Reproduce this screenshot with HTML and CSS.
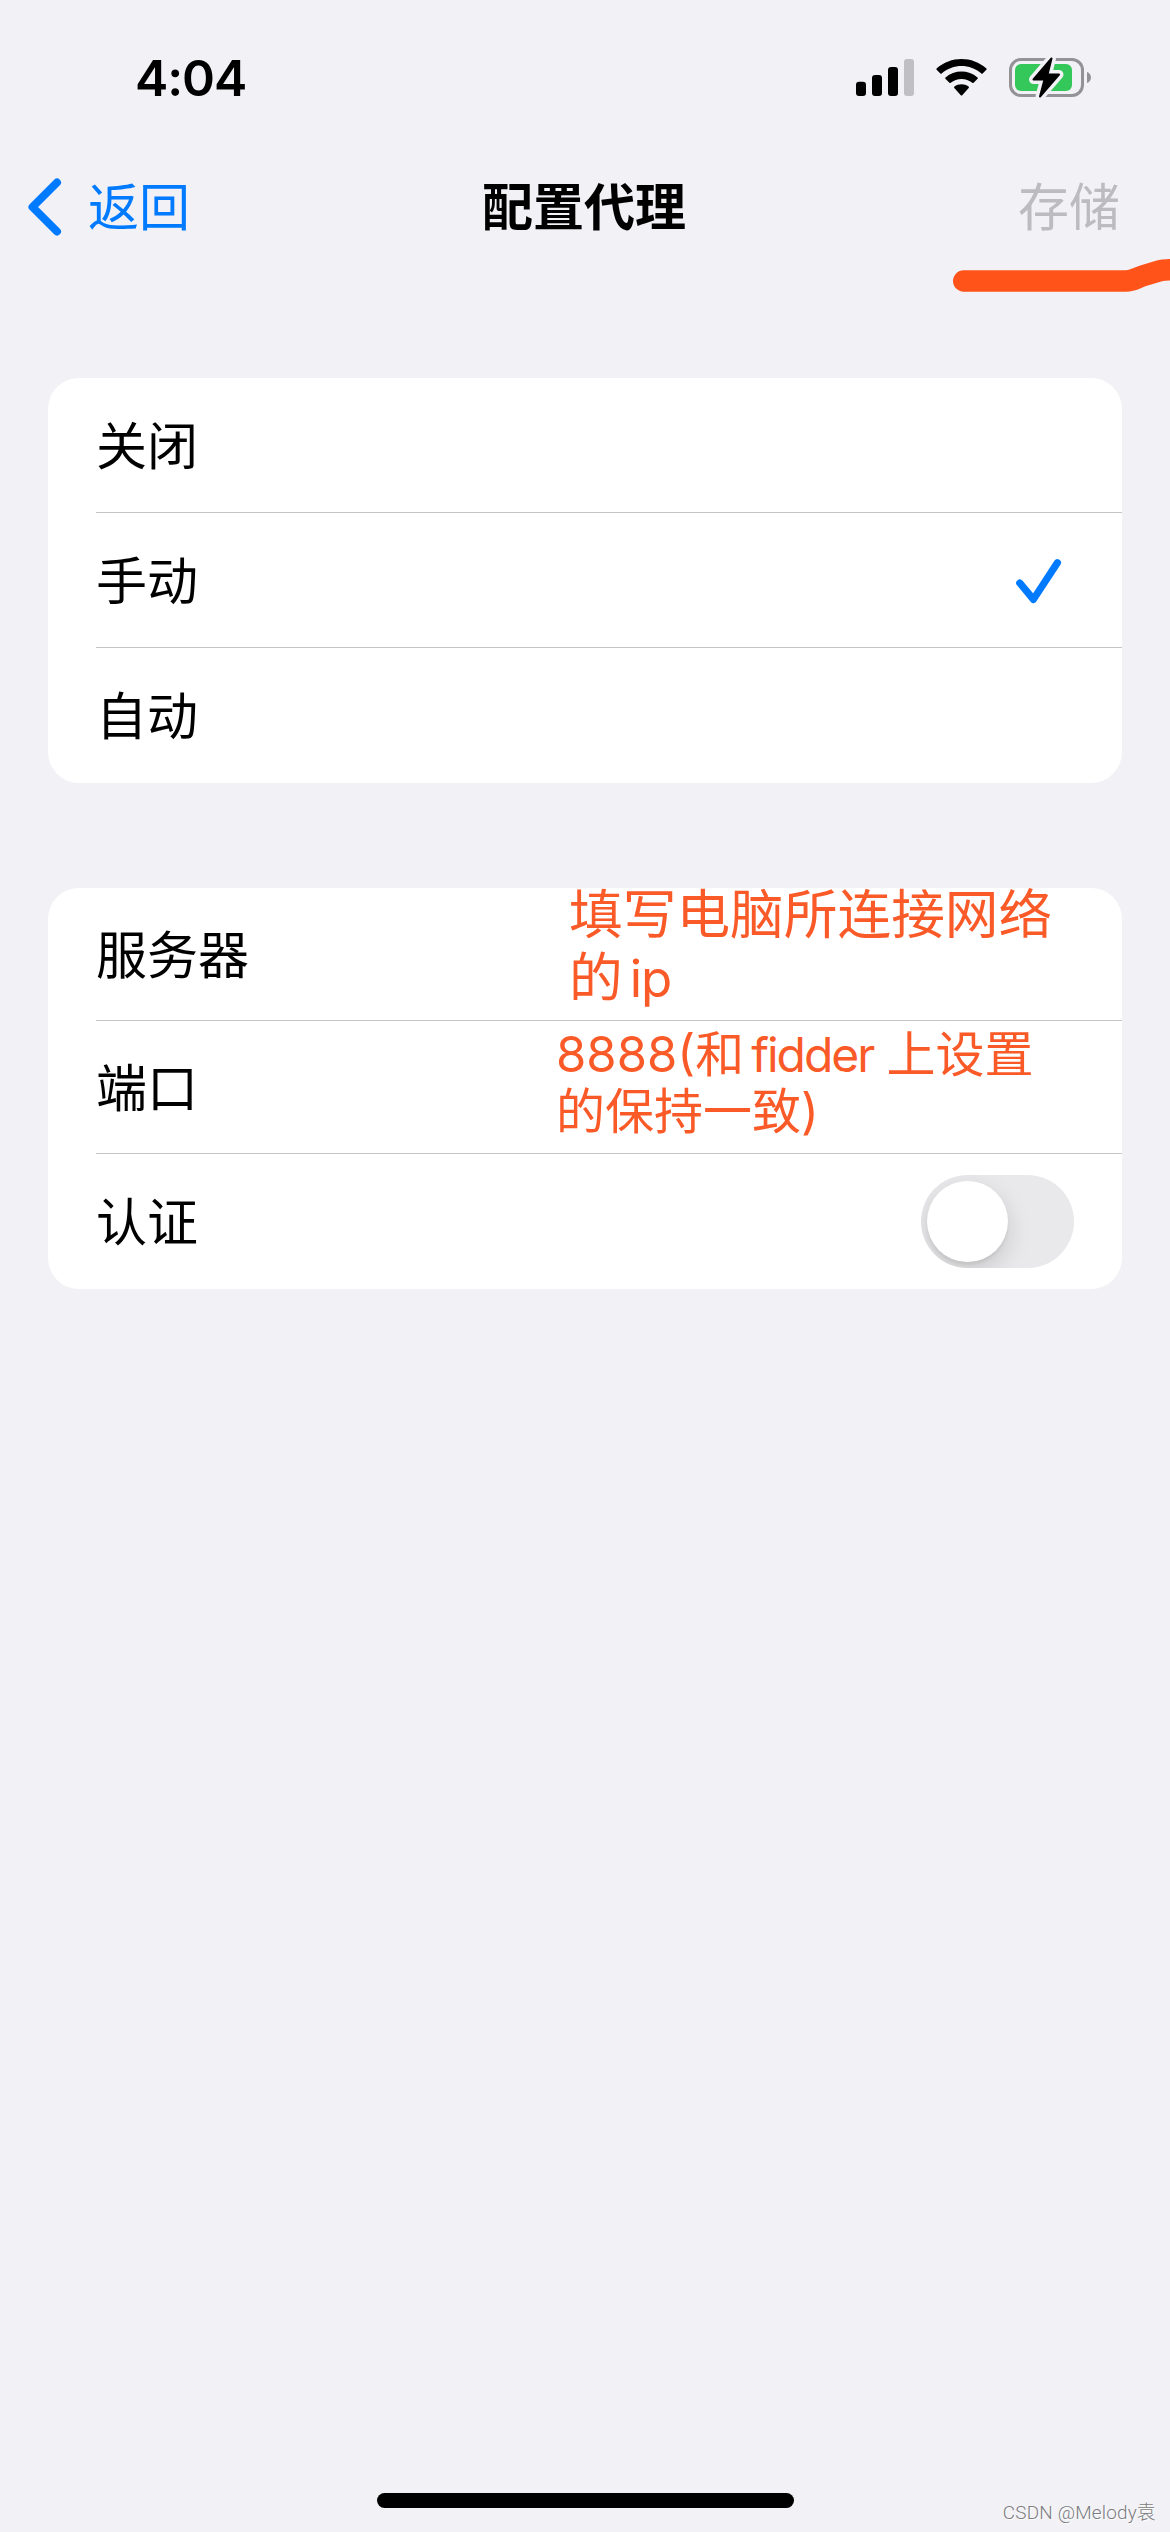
FILE: index.html
```html
<!DOCTYPE html>
<html lang="zh-CN">
<head>
<meta charset="utf-8">
<title>配置代理</title>
<link rel="stylesheet" href="styles.css">
</head>
<body>
<div class="screen">
  <header class="status">
    <div class="time">4:04</div>
    <div class="indicators">
      <svg class="signal" width="58" height="37" viewBox="0 0 58 37">
        <rect x="0" y="22.7" width="10" height="14.3" rx="3"/>
        <rect x="16" y="16" width="10" height="21" rx="3"/>
        <rect x="32" y="8" width="10" height="29" rx="3"/>
        <rect class="dim" x="48" y="0" width="10" height="37" rx="3"/>
      </svg>
      <svg class="wifi" width="51" height="37" viewBox="0 0 51 37">
        <path d="M.6 9.6C14.5-3.2 36.5-3.2 50.4 9.6Q51 10.200 50.400 10.800L46.600 14.600Q46 15.200 45.400 14.600C34.100 4.600 16.900 4.600 5.600 14.600Q5 15.200 4.400 14.600L.6 10.800Q0 10.200 .6 9.600Z"/>
        <path d="M9.500 18.500C18.500 10.600 32.500 10.600 41.500 18.500Q42.200 19.100 41.600 19.700L37.600 23.700Q37 24.300 36.300 23.700C30.200 18.600 20.800 18.600 14.700 23.700Q14 24.300 13.400 23.700L9.400 19.700Q8.800 19.100 9.500 18.500Z"/>
        <path d="M18.400 27.600C22.400 24.400 28.600 24.400 32.600 27.600Q33.300 28.200 32.700 28.900L26.200 36.200Q25.500 37 24.800 36.200L18.300 28.900Q17.700 28.200 18.400 27.600Z"/>
      </svg>
      <svg class="battery" width="83" height="43" viewBox="0 0 83 43">
        <rect class="shell" x="1.500" y="3.500" width="72" height="36" rx="10.500"/>
        <path class="cap" d="M78 16C83.300 17.600 83.300 25.400 78 27Z"/>
        <rect class="level" x="6" y="8" width="57" height="27" rx="6"/>
        <path class="halo" d="M42.500 2.500L24.500 23.500H35.500L31 40.500L50 18.500H38.500Z"/>
        <path class="bolt" d="M42.500 2.500L24.500 23.500H35.500L31 40.500L50 18.500H38.500Z"/>
      </svg>
    </div>
  </header>

  <nav class="navbar">
    <a class="back">
      <svg width="36" height="60" viewBox="0 0 36 60"><path d="M30 5.500L5.500 30L30 54.500"/></svg>
      <span>返回</span>
    </a>
    <h1 class="title">配置代理</h1>
    <span class="save">存储</span>
    <svg class="marker" width="217" height="40" viewBox="0 0 217 40"><path d="M10.700 26H173C180 26 184 22.500 191 20.500L206 16Q210 14.800 217 14.800H230"/></svg>
  </nav>

  <main class="groups">
    <ul class="group modes">
      <li class="row">关闭</li>
      <li class="row">手动
        <svg class="check" width="46" height="45" viewBox="0 0 46 45"><path d="M3.800 24L17.400 40.400L41.400 3.800"/></svg>
      </li>
      <li class="row">自动</li>
    </ul>
    <ul class="group proxy">
      <li class="row">服务器</li>
      <li class="row">端口</li>
      <li class="row last">认证<span class="switch"><span class="knob"></span></span></li>
      <li class="note note-server">填写电脑所连接网络<br>的<span class="latin ip">ip</span></li>
      <li class="note note-port">8888(和<span class="latin fid">fidder</span>上设置<br>的保持一致)</li>
    </ul>
  </main>

  <div class="home"></div>
  <div class="watermark">CSDN @Melody袁</div>
</div>
</body>
</html>
```
FILE: styles.css
```css
* { box-sizing: border-box; }

body {
  margin: 0;
  background: #f1f1f6;
  color: #000;
  font-family: Inter, "Noto Sans CJK SC", sans-serif;
}

svg { display: block; overflow: visible; fill: none; }

.screen {
  position: relative;
  display: flex;
  flex-direction: column;
  width: 1170px;
  height: 2532px;
  overflow: hidden;
}

.status {
  display: flex;
  justify-content: space-between;
  height: 141px;
  padding: 48px 78px 0 135px;
}

.time {
  font-size: 50px;
  font-weight: 600;
  line-height: 60px;
  letter-spacing: -1.100px;
}

.indicators { display: flex; align-items: center; height: 59px; }
.signal { fill: #000; margin-right: 22px; }
.signal .dim { fill: #bfbfc4; }
.wifi { fill: #000; margin-right: 22px; }
.battery .shell { stroke: #929297; stroke-width: 3; }
.battery .cap { fill: #929297; }
.battery .level { fill: #34c759; }
.battery .halo { fill: #f1f1f6; stroke: #f1f1f6; stroke-width: 9; stroke-linejoin: round; }
.battery .bolt { fill: #000; stroke: #000; stroke-width: 2; stroke-linejoin: round; }

.navbar {
  position: relative;
  display: grid;
  grid-template-columns: 1fr auto 1fr;
  align-items: center;
  height: 132px;
  padding: 0 50px 0 27px;
  font-size: 51px;
  line-height: 74px;
}

.back { display: flex; align-items: center; gap: 25px; color: #007aff; }
.back svg { stroke: #007aff; stroke-width: 8; stroke-linecap: round; stroke-linejoin: round; }
.back span, .save { padding-top: 2px; }
.title { margin: 0; padding: 2px 0 0 21px; font-size: 51px; font-weight: 700; }
.save { justify-self: end; color: #bbbbc0; }

.marker { position: absolute; right: 0; bottom: -22px; stroke: #ff5319; stroke-width: 21.400; stroke-linecap: round; stroke-linejoin: round; }

.groups {
  display: flex;
  flex-direction: column;
  gap: 105px;
  padding: 105px 48px 0;
}

.group {
  position: relative;
  margin: 0;
  padding: 0;
  list-style: none;
  background: #fff;
  border-radius: 31px;
}

.row {
  display: flex;
  align-items: center;
  justify-content: space-between;
  height: 135px;
  margin-left: 48px;
  padding: 3px 48px 0 0;
  border-bottom: 1px solid #c4c4c7;
  font-size: 51px;
  line-height: 74px;
}

.proxy .row { height: 133px; }
.row:nth-child(3) { border-bottom: 0; }
.proxy .last { height: 135px; padding-top: 2px; }

.check { margin-right: 12px; stroke: #007aff; stroke-width: 7.200; stroke-linecap: round; stroke-linejoin: round; }

.switch {
  width: 153px;
  height: 93px;
  margin-bottom: 2px;
  padding: 6px;
  border-radius: 47px;
  background: #e9e9eb;
  overflow: hidden;
}

.knob {
  display: block;
  width: 81px;
  height: 81px;
  border-radius: 50%;
  background: #fff;
  box-shadow: 0 9px 24px rgba(0, 0, 0, .15), 0 3px 3px rgba(0, 0, 0, .06);
}

.note { position: absolute; color: #fa5a28; white-space: nowrap; }
.note-server { left: 521px; top: -4px; font-size: 53.700px; line-height: 62.500px; }
.note-port { left: 508px; top: 138px; font-size: 49px; line-height: 57px; }
.latin { margin-left: 7px; }
.ip { font-size: 51px; letter-spacing: -1px; }
.fid { margin-right: 13px; font-size: 48px; letter-spacing: -2px; }

.home {
  width: 417px;
  height: 15px;
  margin: auto auto 24px 377px;
  border-radius: 8px;
  background: #000;
}

.watermark {
  position: absolute;
  right: 14px;
  bottom: 7px;
  color: #7c7c80;
  font-family: Roboto, "Noto Sans CJK SC", sans-serif;
  font-size: 19px;
  font-weight: 300;
  line-height: 24px;
  letter-spacing: .150px;
  text-shadow: 1px 1px 0 #fff;
}
```
